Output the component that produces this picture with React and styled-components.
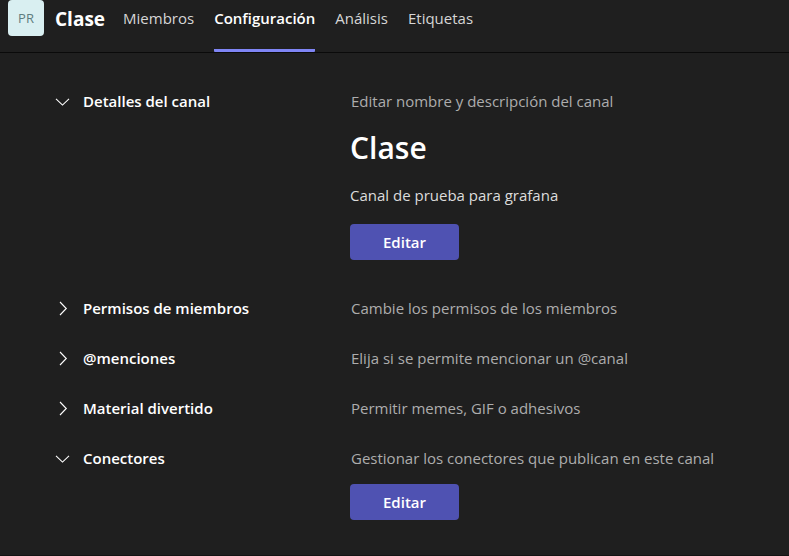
import React, { useState } from "react";
import styled, { createGlobalStyle } from "styled-components";

const GlobalStyle = createGlobalStyle`
  *, *::before, *::after { box-sizing: border-box; }
  body {
    margin: 0;
    background: #1f1f1f;
    color: #fff;
    font-family: "Open Sans", "Noto Sans", sans-serif;
    font-size: 15px;
    line-height: 20px;
  }
  button { font: inherit; color: inherit; }
`;

const Page = styled.div`
  display: flex;
  flex-direction: column;
  min-height: 100vh;
  border-bottom: 1px solid #141414;
`;

const Header = styled.header`
  display: flex;
  align-items: flex-start;
  height: 53px;
  padding-left: 8px;
  border-bottom: 1px solid #0a0a0a;
`;

const Avatar = styled.div`
  width: 36px;
  height: 36px;
  border-radius: 4px;
  background: #d9eff1;
  color: #5f7d80;
  font-size: 13px;
  line-height: 36px;
  text-align: center;
`;

const ChannelName = styled.h1`
  margin: 0 18px 0 11px;
  font-size: 19px;
  font-weight: 700;
  line-height: 38px;
`;

const Tabs = styled.nav`
  display: flex;
  gap: 20px;
  height: 52px;
`;

const Tab = styled.button`
  padding: 0 0 14px;
  border: 0;
  border-bottom: 3px solid ${(p) => (p.$active ? "#7f85f5" : "transparent")};
  border-radius: 1px;
  background: none;
  color: ${(p) => (p.$active ? "#fff" : "#d6d6d6")};
  font-weight: ${(p) => (p.$active ? 600 : 400)};
  cursor: pointer;
`;

const Main = styled.main`
  padding: 23px 55px 32px;
`;

const Section = styled.section`
  display: grid;
  grid-template-columns: 295px 1fr;
  align-items: center;
`;

const Toggle = styled.button`
  display: flex;
  align-items: center;
  gap: 12px;
  height: 50px;
  padding: 0;
  border: 0;
  background: none;
  font-weight: 600;
  cursor: pointer;
`;

const Summary = styled.p`
  margin: 0;
  padding-left: 1px;
  color: #adadad;
`;

const Panel = styled.div`
  grid-column: 2;
  padding: ${(p) => (p.$spaced ? "0 0 23px" : "1px 0 0")};
`;

const Title = styled.h2`
  margin: 0 0 15px;
  font-size: 30px;
  font-weight: 600;
  line-height: 44px;
`;

const Description = styled.p`
  margin: 0 0 19px;
  color: #dcdcdc;
`;

const EditButton = styled.button`
  width: 109px;
  height: 36px;
  border: 0;
  border-radius: 4px;
  background: #4f52b2;
  font-weight: 600;
  cursor: pointer;
`;

const Chevron = ({ open }) => (
  <svg width="16" height="16" viewBox="0 0 16 16" fill="none" stroke="#fff" strokeWidth="1.1" aria-hidden="true">
    <path d={open ? "M1 5.8 7.5 12.1 14 5.8" : "M5 2 11.3 8.5 5 15"} />
  </svg>
);

const tabs = ["Miembros", "Configuración", "Análisis", "Etiquetas"];

const sections = [
  { title: "Detalles del canal", summary: "Editar nombre y descripción del canal", details: true },
  { title: "Permisos de miembros", summary: "Cambie los permisos de los miembros" },
  { title: "@menciones", summary: "Elija si se permite mencionar un @canal" },
  { title: "Material divertido", summary: "Permitir memes, GIF o adhesivos" },
  { title: "Conectores", summary: "Gestionar los conectores que publican en este canal", editable: true },
];

function SettingsSection({ title, summary, details, editable }) {
  const [open, setOpen] = useState(Boolean(details || editable));
  return (
    <Section>
      <Toggle aria-expanded={open} onClick={() => setOpen(!open)}>
        <Chevron open={open} />
        {title}
      </Toggle>
      <Summary>{summary}</Summary>
      {open && (details || editable) && (
        <Panel $spaced={details}>
          {details && (
            <>
              <Title>Clase</Title>
              <Description>Canal de prueba para grafana</Description>
            </>
          )}
          <EditButton>Editar</EditButton>
        </Panel>
      )}
    </Section>
  );
}

export default function App() {
  const [active, setActive] = useState("Configuración");
  return (
    <Page>
      <GlobalStyle />
      <Header>
        <Avatar>PR</Avatar>
        <ChannelName>Clase</ChannelName>
        <Tabs>
          {tabs.map((name) => (
            <Tab
              key={name}
              $active={name === active}
              aria-current={name === active ? "page" : undefined}
              onClick={() => setActive(name)}
            >
              {name}
            </Tab>
          ))}
        </Tabs>
      </Header>
      <Main>
        {sections.map((section) => (
          <SettingsSection key={section.title} {...section} />
        ))}
      </Main>
    </Page>
  );
}
